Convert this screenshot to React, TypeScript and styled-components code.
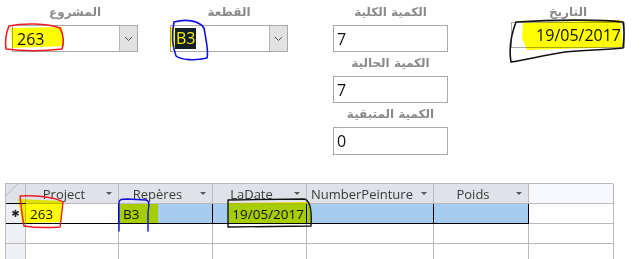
import React from 'react';
import styled, { createGlobalStyle } from 'styled-components';

const GlobalStyle = createGlobalStyle`
  body {
    margin: 0;
    padding: 0;
    background: #ffffff;
    font-family: 'Open Sans', 'Noto Sans', 'DejaVu Sans', sans-serif;
  }
`;

const Page = styled.div`
  position: relative;
  width: 644px;
  height: 259px;
  overflow: hidden;
  background: #fff;
`;

const Form = styled.div`
  display: flex;
  align-items: flex-start;
  height: 183px;
  padding: 2px 0 0 12px;
  box-sizing: border-box;
`;

const Column = styled.div<{ $width: number; $gap: number }>`
  display: flex;
  flex-direction: column;
  gap: 1px;
  width: ${p => p.$width}px;
  margin-right: ${p => p.$gap}px;
`;

const Field = styled.div<{ $width: number; $gap?: number }>`
  display: flex;
  flex-direction: column;
  width: ${p => p.$width}px;
  margin-right: ${p => p.$gap ?? 0}px;
`;

const Label = styled.div<{ $space?: number }>`
  height: 20px;
  line-height: 20px;
  margin-bottom: ${p => p.$space ?? 3}px;
  text-align: center;
  direction: rtl;
  font-family: 'DejaVu Sans', sans-serif;
  font-size: 12px;
  font-weight: bold;
  color: #8a8a8a;
`;

const Combo = styled.div`
  display: flex;
  height: 27px;
  border: 1px solid #a9a9a9;
  box-sizing: border-box;
  background: #fff;
`;

const ComboText = styled.div`
  flex: 1;
  display: flex;
  align-items: center;
  padding-left: 4px;
  font-size: 16px;
  color: #111;
`;

const Selected = styled.span`
  background: #13202a;
  color: #f4f000;
  padding: 0 1px;
  line-height: 21px;
`;

const DropButton = styled.div`
  width: 17px;
  border-left: 1px solid #b4b4b4;
  background: #e1e1e1;
  display: flex;
  align-items: center;
  justify-content: center;
`;

const TextBox = styled.div<{ $height?: number; $align?: string }>`
  height: ${p => p.$height ?? 27}px;
  border: 1px solid #a9a9a9;
  box-sizing: border-box;
  display: flex;
  align-items: center;
  justify-content: ${p => p.$align ?? 'flex-start'};
  padding: 0 3px;
  font-size: 16px;
  color: #111;
  background: #fff;
`;

const Grid = styled.div`
  display: grid;
  grid-template-columns: 20px 93px 94px 94px 127px 95px 85px;
  grid-auto-rows: 20px;
  margin-left: 5px;
  width: 608px;
  border-top: 1px solid #b9b9b9;
  border-left: 1px solid #b9b9b9;
  box-sizing: border-box;
`;

const HeadCell = styled.div<{ $blank?: boolean; $left?: boolean }>`
  position: relative;
  display: flex;
  align-items: center;
  justify-content: ${p => (p.$left ? 'flex-start' : 'center')};
  padding: 0 16px 0 ${p => (p.$left ? 4 : 0)}px;
  background: ${p => (p.$blank ? '#f7f7fe' : '#dfe2e8')};
  border-right: 1px solid #b9b9b9;
  border-bottom: 1px solid #b9b9b9;
  font-size: 13px;
  color: #3a3a3a;
  box-sizing: border-box;
`;

const Arrow = styled.span`
  position: absolute;
  right: 6px;
  top: 8px;
  width: 0;
  height: 0;
  border-left: 3px solid transparent;
  border-right: 3px solid transparent;
  border-top: 3px solid #555;
`;

const Corner = styled.div`
  background: #dfe2e8;
  border-right: 1px solid #b9b9b9;
  border-bottom: 1px solid #b9b9b9;
  background-image: linear-gradient(135deg, transparent 45%, #c4c8d0 46%, #c4c8d0 52%, transparent 53%);
  background-size: 12px 12px;
  background-repeat: no-repeat;
`;

const Selector = styled.div<{ $active?: boolean }>`
  display: flex;
  align-items: center;
  justify-content: center;
  background: #eef0f6;
  border-right: 1px solid #b9b9b9;
  border-bottom: 1px solid ${p => (p.$active ? '#000' : '#b9b9b9')};
  border-top: ${p => (p.$active ? '1px solid #000' : 'none')};
  margin-top: ${p => (p.$active ? '-1px' : '0')};
  font-family: 'DejaVu Sans', sans-serif;
  font-size: 10px;
  color: #222;
`;

const Cell = styled.div<{ $active?: boolean; $editing?: boolean; $blank?: boolean; $right?: boolean }>`
  display: flex;
  align-items: center;
  justify-content: ${p => (p.$right ? 'flex-end' : 'flex-start')};
  padding: 0 ${p => (p.$right ? 2 : 0)}px 0 4px;
  font-size: 13.5px;
  color: #111;
  box-sizing: border-box;
  background: ${p => (p.$active && !p.$editing ? '#a6cdf0' : '#fff')};
  border-right: 1px solid ${p => (p.$active && !p.$blank ? '#000' : '#b9b9b9')};
  border-bottom: 1px solid ${p => (p.$active && !p.$blank ? '#000' : '#b9b9b9')};
  border-top: ${p => (p.$active && !p.$blank ? '1px solid #000' : 'none')};
  margin-top: ${p => (p.$active && !p.$blank ? '-1px' : '0')};
`;

const Overlay = styled.svg`
  position: absolute;
  left: 0;
  top: 0;
  pointer-events: none;
`;

const Marker = styled.g`
  mix-blend-mode: multiply;
`;

const Chevron: React.FC = () => (
  <svg width="9" height="6" viewBox="0 0 9 6">
    <path d="M1 1 L4.5 4.5 L8 1" fill="none" stroke="#555" strokeWidth="1" />
  </svg>
);

const headers = ['Project', 'Repères', 'LaDate', 'NumberPeinture', 'Poids'];

const App: React.FC = () => {
  return (
    <>
      <GlobalStyle />
      <Page>
        <Form>
          <Field $width={126} $gap={32}>
            <Label>المشروع</Label>
            <Combo>
              <ComboText>263</ComboText>
              <DropButton><Chevron /></DropButton>
            </Combo>
          </Field>
          <Field $width={118} $gap={45}>
            <Label>القطعة</Label>
            <Combo>
              <ComboText><Selected>B3</Selected></ComboText>
              <DropButton><Chevron /></DropButton>
            </Combo>
          </Field>
          <Column $width={115} $gap={63}>
            <Field $width={115}>
              <Label>الكمية الكلية</Label>
              <TextBox>7</TextBox>
            </Field>
            <Field $width={115}>
              <Label>الكمية الحالية</Label>
              <TextBox>7</TextBox>
            </Field>
            <Field $width={115}>
              <Label>الكمية المتبقية</Label>
              <TextBox $height={28}>0</TextBox>
            </Field>
          </Column>
          <Field $width={114}>
            <Label $space={0}>التاريخ</Label>
            <TextBox $height={26} $align="flex-end">19/05/2017</TextBox>
          </Field>
        </Form>

        <Grid>
          <Corner />
          {headers.map(h => (
            <HeadCell key={h} $left={h === 'NumberPeinture'}>
              {h}
              <Arrow />
            </HeadCell>
          ))}
          <HeadCell $blank />

          <Selector $active>✱</Selector>
          <Cell $active $editing>263</Cell>
          <Cell $active>B3</Cell>
          <Cell $active $right>19/05/2017</Cell>
          <Cell $active />
          <Cell $active />
          <Cell $blank />

          {[0, 1].map(r => (
            <React.Fragment key={r}>
              <Selector />
              <Cell />
              <Cell />
              <Cell />
              <Cell />
              <Cell />
              <Cell />
            </React.Fragment>
          ))}
        </Grid>

        <Overlay width="644" height="259" viewBox="0 0 644 259">
          <Marker fill="#ffff00">
            <path d="M11 28 L62 27 L64 46 L12 48 Z" />
            <rect x="170" y="27" width="5" height="20" />
            <path d="M523 23 L620 20 L623 47 L527 50 L522 38 Z" />
            <path d="M18 199 L62 201 L61 222 L22 223 Z" />
            <rect x="120" y="204" width="38" height="19" />
            <path d="M228 203 L310 202 L311 224 L229 224 Z" />
          </Marker>
          <g fill="none" strokeLinecap="round" strokeLinejoin="round">
            <path d="M9 26 C22 23 48 23 60 28 C64 35 64 44 62 49 C45 51 22 51 6 49 C5 42 6 33 9 26" stroke="#ee1c24" strokeWidth="1.6" />
            <path d="M174 22 C185 19 199 20 204 28 C206 40 209 52 207 58 C195 61 181 60 176 56 C172 45 172 32 174 22" stroke="#1010e0" strokeWidth="1.6" />
            <path d="M516 22 C550 20 600 19 623 22 C625 32 624 40 623 48 C605 50 585 50 565 52 C545 55 525 60 511 62 C509 50 511 35 516 22" stroke="#111" strokeWidth="1.6" />
            <path d="M20 196 C35 195 55 197 63 202 C62 212 61 220 60 227 C45 228 30 227 24 226 C22 215 21 205 20 196" stroke="#ee1c24" strokeWidth="1.4" />
            <path d="M119 231 L119 203 C119 199 122 199 127 199 L146 200 C150 201 149 206 148 212 L148 231" stroke="#1010e0" strokeWidth="1.4" />
            <path d="M228 200 L304 199 C310 200 312 210 311 226 L228 227 Z" stroke="#111" strokeWidth="1.4" />
          </g>
        </Overlay>
      </Page>
    </>
  );
};

export default App;
